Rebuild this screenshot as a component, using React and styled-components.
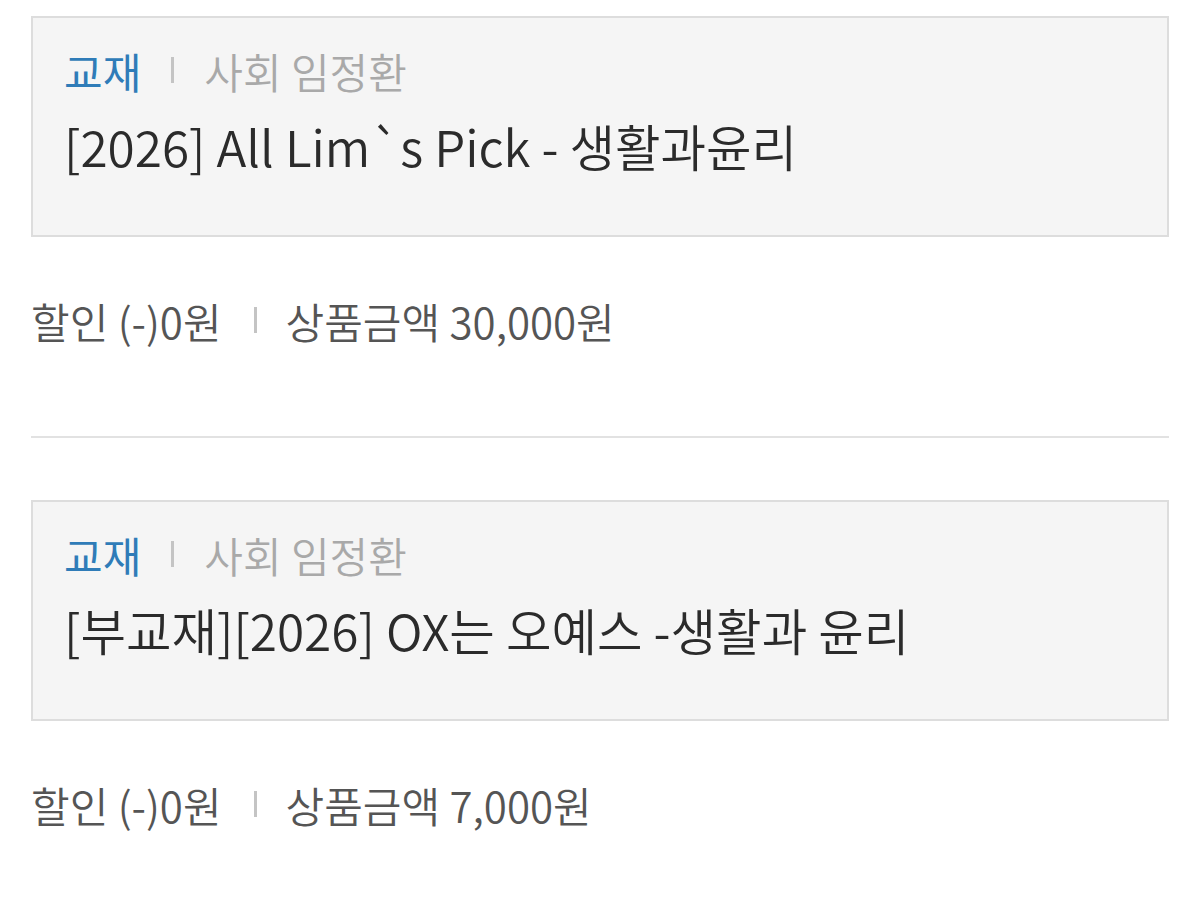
import React from "react";
import styled, { createGlobalStyle } from "styled-components";

const GlobalStyle = createGlobalStyle`
  body {
    margin: 0;
    background: #ffffff;
    font-family: "Noto Sans CJK KR", "Noto Sans", sans-serif;
  }
`;

const items = [
  {
    category: "교재",
    teacher: "사회 임정환",
    title: "[2026] All Lim`s Pick - 생활과윤리",
    discount: "(-)0원",
    price: "30,000원",
  },
  {
    category: "교재",
    teacher: "사회 임정환",
    title: "[부교재][2026] OX는 오예스 -생활과 윤리",
    discount: "(-)0원",
    price: "7,000원",
  },
];

function App() {
  return (
    <>
      <GlobalStyle />
      <StList>
        {items.map((item, i) => (
          <StItem key={i} last={i === items.length - 1}>
            <StCard>
              <StMeta>
                <StCategory>{item.category}</StCategory>
                <StBar />
                <StTeacher>{item.teacher}</StTeacher>
              </StMeta>
              <StTitle>{item.title}</StTitle>
            </StCard>
            <StPriceRow>
              <span>할인 {item.discount}</span>
              <StBar wide />
              <span>상품금액 {item.price}</span>
            </StPriceRow>
          </StItem>
        ))}
      </StList>
    </>
  );
}

export default App;

const StList = styled.div`
  padding: 16px 31px 0;
`;

const StItem = styled.div`
  padding-bottom: ${(p) => (p.last ? "60px" : "86px")};
  border-bottom: ${(p) => (p.last ? "none" : "2px solid #e2e2e2")};
  margin-bottom: ${(p) => (p.last ? "0" : "62px")};
`;

const StCard = styled.div`
  box-sizing: border-box;
  height: 221px;
  background-color: #f5f5f5;
  border: 2px solid #dddddd;
  padding: 22px 31px 0;
`;

const StMeta = styled.div`
  display: flex;
  align-items: center;
  height: 60px;
  font-size: 42px;
  font-weight: 350;
`;

const StCategory = styled.span`
  color: #2f7cb8;
  font-weight: 400;
`;

const StTeacher = styled.span`
  color: #a9a9a9;
`;

const StBar = styled.span`
  display: inline-block;
  flex-shrink: 0;
  width: 3px;
  height: 26px;
  background-color: #c4c4c4;
  margin: ${(p) => (p.wide ? "0 29px 0 32px" : "0 30px")};
`;

const StTitle = styled.div`
  margin-top: 12px;
  font-size: 49.5px;
  font-weight: 350;
  line-height: 68px;
  color: #2b2b2b;
`;

const StPriceRow = styled.div`
  display: flex;
  align-items: center;
  height: 60px;
  margin-top: 53px;
  font-size: 42px;
  font-weight: 350;
  color: #555555;
`;
